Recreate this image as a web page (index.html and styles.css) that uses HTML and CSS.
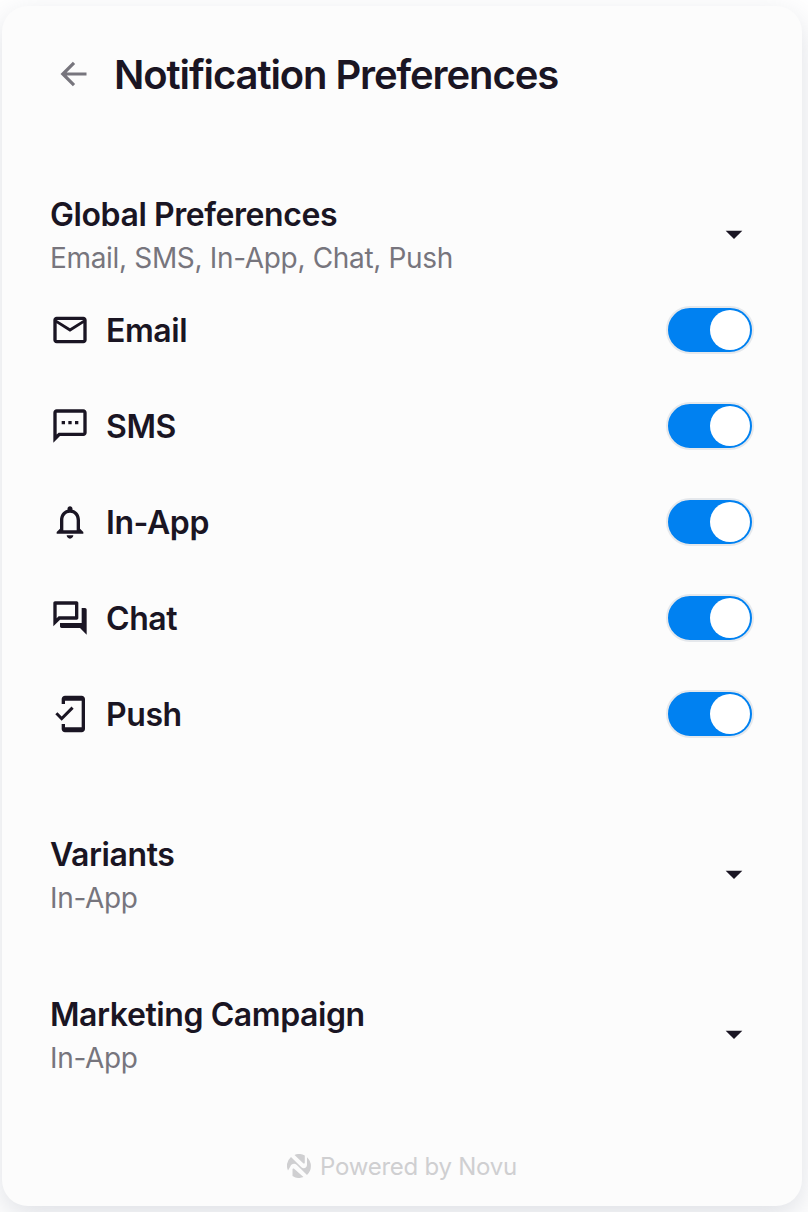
FILE: index.html
```html
<!DOCTYPE html>
<html lang="en">
<head>
<meta charset="utf-8">
<title>Notification Preferences</title>
<link rel="stylesheet" href="styles.css">
</head>
<body>
<main class="card">
  <header class="header">
    <svg class="back" viewBox="0 0 40 40"><path d="M20 8.800 8.800 20 20 31.200M9 20h23.500"/></svg>
    <h1 class="title">Notification Preferences</h1>
  </header>

  <section class="group group-open">
    <div class="group-text">
      <h2 class="name">Global Preferences</h2>
      <p class="channels">Email, SMS, In-App, Chat, Push</p>
    </div>
    <svg class="caret" viewBox="0 0 24 24"><path d="m7 10 5 5 5-5z"/></svg>
  </section>

  <ul class="list">
    <li class="row">
      <svg class="icon" viewBox="0 0 24 24"><path d="M22 6c0-1.100-.9-2-2-2H4c-1.100 0-2 .9-2 2v12c0 1.100.9 2 2 2h16c1.100 0 2-.9 2-2V6zm-2 0l-8 5-8-5h16zm0 12H4V8l8 5 8-5v10z"/></svg>
      <span class="label">Email</span><span class="toggle"></span>
    </li>
    <li class="row">
      <svg class="icon" viewBox="0 0 24 24"><path d="M20 2H4c-1.100 0-2 .9-2 2v18l4-4h14c1.100 0 2-.9 2-2V4c0-1.100-.9-2-2-2zm0 14H5.170L4 17.170V4h16v12zM7 9h2v2H7zm4 0h2v2h-2zm4 0h2v2h-2z"/></svg>
      <span class="label">SMS</span><span class="toggle"></span>
    </li>
    <li class="row">
      <svg class="icon" viewBox="0 0 24 24"><path d="M12 22c1.100 0 2-.9 2-2h-4c0 1.100.9 2 2 2zm6-6v-5c0-3.070-1.630-5.640-4.500-6.320V4c0-.830-.670-1.500-1.500-1.500s-1.500.670-1.500 1.500v.680C7.640 5.360 6 7.920 6 11v5l-2 2v1h16v-1l-2-2zm-2 1H8v-6c0-2.480 1.510-4.500 4-4.500s4 2.020 4 4.500v6z"/></svg>
      <span class="label">In-App</span><span class="toggle"></span>
    </li>
    <li class="row">
      <svg class="icon" viewBox="0 0 24 24"><path d="M15 4v7H5.170L4 12.170V4h11m1-2H3c-.550 0-1 .450-1 1v14l4-4h10c.550 0 1-.450 1-1V3c0-.550-.450-1-1-1zm5 4h-2v9H6v2c0 .550.450 1 1 1h11l4 4V7c0-.550-.450-1-1-1z"/></svg>
      <span class="label">Chat</span><span class="toggle"></span>
    </li>
    <li class="row">
      <svg class="icon" viewBox="0 0 24 24"><path d="M19 1H9c-1.100 0-2 .9-2 2v3h2V4h10v16H9v-2H7v3c0 1.100.9 2 2 2h10c1.100 0 2-.9 2-2V3c0-1.100-.9-2-2-2zM7.010 13.470l-2.550-2.550-1.270 1.270L7 16l7.190-7.190-1.270-1.270z"/></svg>
      <span class="label">Push</span><span class="toggle"></span>
    </li>
  </ul>

  <section class="group">
    <div class="group-text">
      <h2 class="name">Variants</h2>
      <p class="channels">In-App</p>
    </div>
    <svg class="caret" viewBox="0 0 24 24"><path d="m7 10 5 5 5-5z"/></svg>
  </section>
  <section class="group">
    <div class="group-text">
      <h2 class="name">Marketing Campaign</h2>
      <p class="channels">In-App</p>
    </div>
    <svg class="caret" viewBox="0 0 24 24"><path d="m7 10 5 5 5-5z"/></svg>
  </section>

  <footer class="footer">
    <svg class="logo" viewBox="0 0 24 24"><path d="M7.500 .9A12 12 0 0 1 17.800 1.500V8.600c0 1-1 1.300-1.600.7zM4 3.100 14.400 13.200C16.600 15.200 20 14 20 10.800V3.200A12 12 0 0 1 20 20.900L9.600 10.800C7.400 8.800 4 10 3.200 12.800L1 16.600A12 12 0 0 1 4 3.100zM16.500 23.100A12 12 0 0 1 5.500 22V15.400c0-1 1-1.300 1.600-.7z"/></svg>
    <span class="powered">Powered by Novu</span>
  </footer>
</main>
</body>
</html>
```
FILE: styles.css
```css
* { box-sizing: border-box; margin: 0; padding: 0; }
body {
  height: 1212px;
  padding: 6px 6px 6px 2px;
  overflow: hidden;
  background: #fff;
  color: #1a1523;
  font-family: Inter, "Liberation Sans", sans-serif;
}
.card {
  display: flex;
  flex-direction: column;
  height: 1200px;
  padding: 48px 48px 0;
  border-radius: 26px;
  background: #fcfcfc;
  box-shadow: 0 10px 30px rgba(122, 133, 153, .25);
}
.header { display: flex; align-items: center; gap: 20px; height: 40px; padding-left: 4px; margin-bottom: 86px; }
.back { width: 40px; height: 40px; fill: none; stroke: #77757d; stroke-width: 3.2; stroke-linecap: butt; stroke-linejoin: miter; }
.title { padding-top: 2px; font-size: 40px; line-height: 42px; font-weight: 600; letter-spacing: -1.1px; white-space: nowrap; }
.group { display: flex; align-items: center; justify-content: space-between; height: 108px; margin-bottom: 52px; }
.group-open { margin-bottom: 18px; }
.group-text { padding-top: 2px; }
.name { font-size: 32px; line-height: 40px; font-weight: 600; letter-spacing: -.42px; }
.channels { margin-top: 5px; font-size: 28px; line-height: 36px; letter-spacing: -.33px; color: #77757d; }
.caret { width: 40px; height: 40px; fill: #1a1523; }
.list { display: flex; flex-direction: column; gap: 48px; margin-bottom: 82px; list-style: none; }
.row { display: flex; align-items: center; height: 48px; }
.icon { width: 40px; height: 40px; margin-right: 16px; fill: #1a1523; }
.label { flex: 1; padding-top: 2px; font-size: 32px; line-height: 40px; font-weight: 600; letter-spacing: -.42px; }
.toggle { display: flex; justify-content: flex-end; width: 88px; height: 48px; padding: 2px; border: 2px solid #e5e8ec; border-radius: 24px; background: #0081f1; }
.toggle::after { content: ""; width: 40px; height: 40px; border-radius: 50%; background: #fff; }
.footer { display: flex; align-items: center; justify-content: center; gap: 9px; height: 40px; margin-top: 6px; }
.logo { width: 24px; height: 24px; fill: #cfcfd1; }
.powered { padding-top: 1px; font-size: 24px; line-height: 32px; letter-spacing: -.25px; color: #cfcfd1; }
```
